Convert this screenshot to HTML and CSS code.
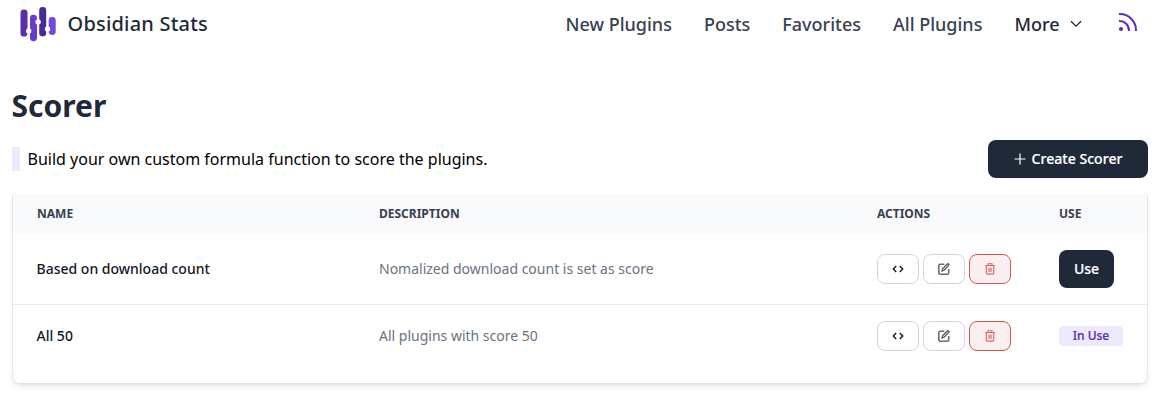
FILE: index.html
```html
<!DOCTYPE html>
<html lang="en">
<head>
<meta charset="utf-8">
<title>Obsidian Stats</title>
<link rel="stylesheet" href="styles.css">
</head>
<body>
<svg class="sprite" aria-hidden="true">
  <symbol id="code" viewBox="0 0 12 12"><path d="M4.2 3 1.3 6l2.9 3M7.8 3l2.9 3-2.9 3" fill="none" stroke="currentColor" stroke-width="1.4"/></symbol>
  <symbol id="edit" viewBox="0 0 12 12"><path d="M6.3 1.3H2.2Q.8 1.3.8 2.7v7.1q0 1.4 1.4 1.4h7.1q1.4 0 1.4-1.4V6" fill="none" stroke="currentColor" stroke-width="1.6" opacity=".85"/><path d="M4.1 8l.4-2.1L9.3 1q.6-.5 1.3.1.6.7.1 1.3L6 7.3 4.1 8z" fill="none" stroke="currentColor" stroke-width="1.3"/></symbol>
  <symbol id="trash" viewBox="0 0 12 12"><path d="M1.2 2.5h9.6M4 2.3V.8h4v1.5M2.3 2.7v7.1q0 1.3 1.3 1.3h4.8q1.3 0 1.3-1.3V2.7" fill="none" stroke="currentColor" stroke-width="1.1"/><path d="M4 4.7h4v4.2H4z" fill="currentColor" opacity=".6"/></symbol>
</svg>
<header class="header">
  <a class="brand">
    <svg class="logo" width="36" height="36" viewBox="0 0 36 36">
      <rect x=".5" y="3.4" width="7" height="27.2" rx="3.4" fill="#5731a8"/>
      <rect x="10" y="8.8" width="7" height="26.4" rx="3.4" fill="#6a3bcb"/>
      <rect x="19.2" y="1" width="7" height="29.3" rx="3.4" fill="#4b2995"/>
      <rect x="28.7" y="11" width="7" height="18" rx="3.4" fill="#7548dc"/>
      <g fill="#fff"><circle cx="8.7" cy="25" r="2.7"/><circle cx="18.1" cy="16" r="2.7"/><circle cx="27.5" cy="23" r="2.7"/></g>
    </svg>
    <span>Obsidian Stats</span>
  </a>
  <nav class="nav">
    <a>New Plugins</a><a>Posts</a><a>Favorites</a><a>All Plugins</a>
    <a class="more">More <svg width="12" height="8" viewBox="0 0 12 8"><path d="M1 1.2 6 6.2 11 1.2" fill="none" stroke="currentColor" stroke-width="1.3"/></svg></a>
    <svg class="rss" width="20" height="20" viewBox="0 0 20 20"><g fill="none" stroke="currentColor" stroke-width="2"><path d="M1 2a16.3 16.3 0 0 1 17 17M1 9a9.5 9.5 0 0 1 10 10"/></g><circle cx="3" cy="17" r="2.1" fill="currentColor"/></svg>
  </nav>
</header>
<main class="main">
  <h1 class="title">Scorer</h1>
  <div class="intro">
    <p class="lead">Build your own custom formula function to score the plugins.</p>
    <button class="button create"><svg width="12" height="12" viewBox="0 0 12 12"><path d="M6 .5v11M.5 6h11" stroke="currentColor" stroke-width="1.2"/></svg>Create Scorer</button>
  </div>
  <section class="table">
    <div class="row head"><span>NAME</span><span>DESCRIPTION</span><span>ACTIONS</span><span>USE</span></div>
    <div class="row first">
      <span class="name">Based on download count</span><span class="desc">Nomalized download count is set as score</span>
      <div class="actions"><button class="icon"><svg class="glyph"><use href="#code"/></svg></button><button class="icon edit"><svg class="glyph"><use href="#edit"/></svg></button><button class="icon delete"><svg class="glyph"><use href="#trash"/></svg></button></div>
      <div class="use"><button class="button">Use</button></div>
    </div>
    <div class="row second">
      <span class="name">All 50</span><span class="desc">All plugins with score 50</span>
      <div class="actions"><button class="icon"><svg class="glyph"><use href="#code"/></svg></button><button class="icon edit"><svg class="glyph"><use href="#edit"/></svg></button><button class="icon delete"><svg class="glyph"><use href="#trash"/></svg></button></div>
      <div class="use"><span class="badge">In Use</span></div>
    </div>
  </section>
  <div class="foot"></div>
</main>
</body>
</html>
```

FILE: styles.css
```css
* { box-sizing: border-box; }
body { margin: 0; min-height: 404px; background: #fff; color: #000; font-family: "Noto Sans", sans-serif; font-size: 16px; }
button { font: inherit; }
svg { flex: none; display: block; }
.sprite { display: none; }
.header { height: 48px; display: flex; justify-content: space-between; padding: 0 25px 0 20px; color: #1f2937; }
.brand { display: flex; align-items: center; gap: 11.5px; font-size: 20px; font-weight: 500; letter-spacing: 0.2px; }
.brand span { padding-bottom: 2px; }
.nav { display: flex; align-items: center; gap: 32px; font-size: 18px; font-weight: 500; color: #374151; }
.more { display: flex; align-items: center; gap: 10.5px; color: #1f2937; }
.rss { color: #5b2fb5; margin: 0 0 4px 4px; }
.main { padding: 36px 15px 0 12px; }
.title { margin: 0 0 0 -0.5px; font-size: 30px; line-height: 44px; font-weight: 700; color: #1f2937; }
.intro { display: flex; justify-content: space-between; align-items: center; margin-top: 12px; height: 38px; }
.lead { margin: 0; border-left: 8px solid #ede9fe; padding-left: 7.5px; line-height: 24px; }
.button { display: flex; align-items: center; justify-content: center; width: 55px; height: 38px; border: 0; border-radius: 8px; background: #1f2937; color: #fff; font-size: 14px; font-weight: 500; padding: 0 0 2px; -webkit-text-stroke: 0.2px #fff; }
.create { width: 160px; gap: 6px; letter-spacing: 0.04px; }
.create svg { margin-top: 1px; }
.table { margin-top: 16px; border: solid #e5e7eb; border-width: 0 1px; }
.row { display: grid; grid-template-columns: 342px 498px 182px 1fr; align-items: center; padding-left: 24px; font-size: 14px; }
.head { height: 40px; background: #f9fafb; color: #374151; font-size: 12px; font-weight: 700; padding-bottom: 2px; }
.first { height: 71px; border-bottom: 1px solid #e5e7eb; }
.second { height: 62px; }
.name, .desc { padding-bottom: 2px; }
.name { font-weight: 500; color: #111827; margin-left: -0.5px; }
.desc { color: #6b7280; }
.actions { display: flex; gap: 4px; }
.icon { width: 42px; height: 30px; display: grid; place-items: center; padding: 0; border: 1px solid #d1d5db; border-radius: 8px; background: #fff; color: #111827; }
.edit { color: #4b5563; }
.delete { background: #fbf0f1; border-color: #d9534f; color: #dc6661; }
.glyph { width: 12px; height: 12px; }
.use { display: flex; }
.badge { width: 64px; height: 20px; line-height: 20px; border-radius: 4px; background: #ede9fe; color: #5b2fb5; font-size: 12px; font-weight: 500; text-align: center; -webkit-text-stroke: 0.2px #5b2fb5; }
.foot { height: 16px; border: solid #e5e7eb; border-width: 0 1px; border-radius: 0 0 8px 8px; box-shadow: 0 4px 6px -1px #0000001a, 0 2px 4px -2px #0000001a; clip-path: inset(0 -8px -14px -8px); }
```
